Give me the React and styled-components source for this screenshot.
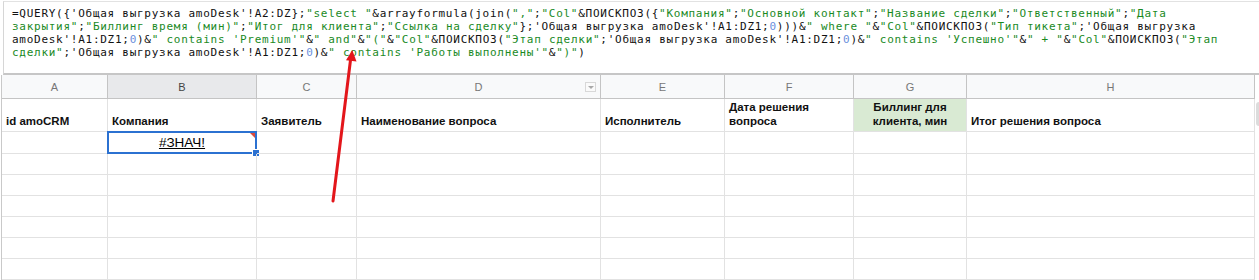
import React from "react";
import styled, { createGlobalStyle } from "styled-components";

const Global = createGlobalStyle`
  html, body { margin: 0; padding: 0; background: #fff; }
  body { font-family: "Liberation Sans", Arial, sans-serif; }
  #root { width: 1259px; height: 280px; overflow: hidden; }
`;

const FORMULA = `=QUERY({'Общая выгрузка amoDesk'!A2:DZ};"select "&arrayformula(join(",";"Col"&ПОИСКПОЗ({"Компания";"Основной контакт";"Название сделки";"Ответственный";"Дата закрытия";"Биллинг время (мин)";"Итог для клиента";"Ссылка на сделку"};'Общая выгрузка amoDesk'!A1:DZ1;0)))&" where "&"Col"&ПОИСКПОЗ("Тип тикета";'Общая выгрузка amoDesk'!A1:DZ1;0)&" contains 'Premium'"&" and"&"("&"Col"&ПОИСКПОЗ("Этап сделки";'Общая выгрузка amoDesk'!A1:DZ1;0)&" contains 'Успешно'"&" + "&"Col"&ПОИСКПОЗ("Этап сделки";'Общая выгрузка amoDesk'!A1:DZ1;0)&" contains 'Работы выполнены'"&")")`;

const COLS = [
  { key: "A", w: 106, title: "id amoCRM" },
  { key: "B", w: 149, title: "Компания", selected: true },
  { key: "C", w: 100, title: "Заявитель" },
  { key: "D", w: 244, title: "Наименование вопроса", filter: true },
  { key: "E", w: 124, title: "Исполнитель" },
  { key: "F", w: 129, title: "Дата решения вопроса" },
  { key: "G", w: 113, title: "Биллинг для клиента, мин", fill: "#d9ead3", center: true },
  { key: "H", w: 288, title: "Итог решения вопроса" },
];

const GRID_COLS = COLS.map((c) => `${c.w}px`).join(" ");
const EMPTY_ROWS = 7;

const TOKEN_COLORS = { str: "#1a8a1f", num: "#6b8fdc", plain: "#111" };

function tokenize(src) {
  const tokens = [];
  src.match(/"[^"]*"|[^"]+/g).forEach((part) => {
    if (part.startsWith('"')) {
      tokens.push({ kind: "str", text: part });
    } else {
      part.split(/(?<=;)(0)(?=\))/).forEach((s, j) => {
        if (s) tokens.push({ kind: j % 2 ? "num" : "plain", text: s });
      });
    }
  });
  const pieces = [];
  tokens.forEach((t) =>
    t.text.split(/( )/).forEach((w) => {
      if (w) pieces.push({ kind: w === " " ? "space" : t.kind, text: w });
    })
  );
  return pieces;
}

const PIECES = tokenize(FORMULA);

const Page = styled.div`
  position: relative;
  width: 1259px;
  height: 280px;
  overflow: hidden;
  background: #fff;
`;

const FormulaBar = styled.div`
  box-sizing: border-box;
  margin: 1px 0 0 3px;
  height: 74px;
  border-top: 1px solid #e2e2e2;
  border-left: 1px solid #d6d6d6;
  border-bottom: 2px solid #c6c6c6;
  padding: 5px 17px 0 8px;
  font-family: "DejaVu Sans Mono", "Liberation Mono", monospace;
  font-size: 11px;
  letter-spacing: 0.73px;
  line-height: 13px;
  color: #111;
  word-wrap: break-word;
`;

const Tok = styled.span`
  color: ${(p) => TOKEN_COLORS[p.$kind]};
`;

const SheetArea = styled.div`
  display: flex;
  align-items: flex-start;
`;

const Grid = styled.div`
  margin-left: 1px;
  border-left: 1px solid #c9c9c9;
  display: flex;
  flex-direction: column;
`;

const Row = styled.div`
  display: grid;
  grid-template-columns: ${GRID_COLS};
  height: ${(p) => p.$h}px;
`;

const ColHead = styled.div`
  position: relative;
  box-sizing: border-box;
  height: 100%;
  background: ${(p) => (p.$selected ? "#e8e9eb" : "#f8f9fa")};
  border-right: 1px solid #c4c4c4;
  border-bottom: 1px solid #c4c4c4;
  display: flex;
  align-items: center;
  justify-content: center;
  font-size: 11px;
  color: ${(p) => (p.$selected ? "#444" : "#777")};
  padding-top: 1px;
`;

const FilterBtn = styled.span`
  position: absolute;
  right: 4px;
  top: 7px;
  width: 11px;
  height: 10px;
  box-sizing: border-box;
  border: 1px solid #d8d8d8;
  background: #fafafa;
  display: flex;
  align-items: center;
  justify-content: center;
  &::after {
    content: "";
    border-left: 3px solid transparent;
    border-right: 3px solid transparent;
    border-top: 3px solid #a8a8a8;
  }
`;

const TitleCell = styled.div`
  box-sizing: border-box;
  height: 100%;
  overflow: hidden;
  background: ${(p) => p.$fill || "#fff"};
  border-right: 1px solid #e2e2e2;
  border-bottom: 1px solid #e2e2e2;
  display: flex;
  align-items: flex-end;
  justify-content: ${(p) => (p.$center ? "center" : "flex-start")};
  text-align: ${(p) => (p.$center ? "center" : "left")};
  padding: 0 4px 3px;
  font-size: 11.5px;
  font-weight: bold;
  line-height: 14px;
  color: #111;
`;

const Cell = styled.div`
  position: relative;
  box-sizing: border-box;
  height: 100%;
  border-right: 1px solid #e2e2e2;
  border-bottom: 1px solid #e2e2e2;
  display: flex;
  align-items: flex-end;
  justify-content: center;
  padding: 0 4px 2px;
  font-size: 13.5px;
  line-height: 16px;
  color: #000;
`;

const ErrorText = styled.span`
  text-decoration: underline;
`;

const Selection = styled.span`
  position: absolute;
  left: -1px;
  top: -1px;
  right: -1px;
  bottom: -1px;
  border: 2px solid #2b71d1;
  pointer-events: none;
`;

const ErrorMark = styled.span`
  position: absolute;
  top: 1px;
  right: 1px;
  width: 0;
  height: 0;
  border-top: 5px solid #d94a3d;
  border-left: 5px solid transparent;
`;

const FillHandle = styled.span`
  position: absolute;
  right: -4px;
  bottom: -4px;
  width: 6px;
  height: 6px;
  background: #2b71d1;
  border: 1px solid #fff;
`;

const ScrollStrip = styled.div`
  width: 4px;
  height: 206px;
`;

const ScrollThumb = styled.span`
  display: block;
  margin: 27px 0 0 1px;
  width: 3px;
  height: 24px;
  border-radius: 3px 0 0 3px;
  background: #dcdcdc;
`;

const ArrowSvg = styled.svg`
  position: absolute;
  left: 0;
  top: 0;
  pointer-events: none;
`;

function FormulaText() {
  return PIECES.map((p, i) =>
    p.kind === "space" ? " " : (
      <Tok key={i} $kind={p.kind}>
        {p.text}
      </Tok>
    )
  );
}

export default function App() {
  return (
    <Page>
      <Global />
      <FormulaBar>
        <FormulaText />
      </FormulaBar>
      <SheetArea>
        <Grid>
          <Row $h={24}>
            {COLS.map((c) => (
              <ColHead key={c.key} $selected={c.selected}>
                {c.key}
                {c.filter && <FilterBtn />}
              </ColHead>
            ))}
          </Row>
          <Row $h={33}>
            {COLS.map((c) => (
              <TitleCell key={c.key} $fill={c.fill} $center={c.center}>
                {c.title}
              </TitleCell>
            ))}
          </Row>
          <Row $h={22}>
            {COLS.map((c) =>
              c.selected ? (
                <Cell key={c.key}>
                  <ErrorText>#ЗНАЧ!</ErrorText>
                  <Selection />
                  <ErrorMark />
                  <FillHandle />
                </Cell>
              ) : (
                <Cell key={c.key} />
              )
            )}
          </Row>
          {Array.from({ length: EMPTY_ROWS }).map((_, r) => (
            <Row key={r} $h={21}>
              {COLS.map((c) => (
                <Cell key={c.key} />
              ))}
            </Row>
          ))}
        </Grid>
        <ScrollStrip>
          <ScrollThumb />
        </ScrollStrip>
      </SheetArea>
      <ArrowSvg width="1259" height="280" viewBox="0 0 1259 280">
        <line x1="333" y1="201" x2="350.5" y2="60" stroke="#e3161b" strokeWidth="3" strokeLinecap="round" />
        <polygon points="352.3,50 356.5,61.5 346,60.2" fill="#e3161b" />
      </ArrowSvg>
    </Page>
  );
}
